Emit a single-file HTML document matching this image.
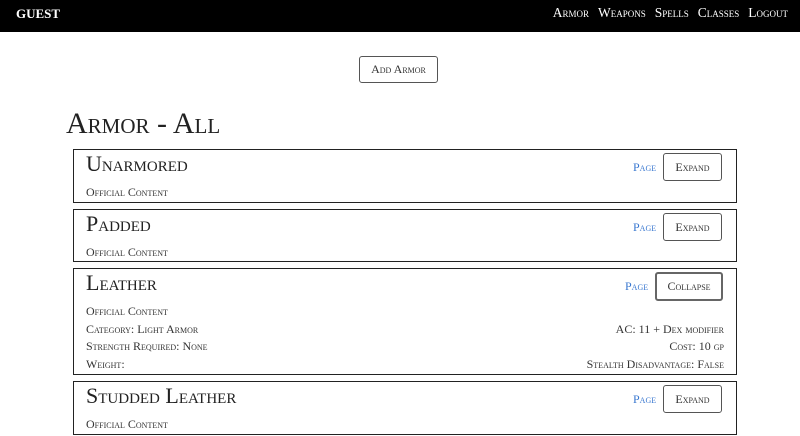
<!DOCTYPE html>
<html><head><style>
*{margin:0;padding:0;box-sizing:border-box}
body{width:800px;height:436px;overflow:hidden;background:#fff;font-family:"Liberation Serif",serif;font-variant:small-caps;color:#222;position:relative}
.nav{position:absolute;left:0;top:0;width:800px;height:32px;background:#000;color:#fff}
.nav .b{position:absolute;left:16px;top:6px;font-size:13px;font-weight:bold;font-variant:normal}
.nav .l{position:absolute;right:12px;top:5px;font-size:13.5px}
.nav .l span{margin-left:9px}
.add{position:absolute;left:359px;top:56px;width:79px;height:27px;border:1px solid #555;border-radius:3px;font-size:12px;text-align:center;line-height:25px;color:#333}
h1{position:absolute;left:66px;top:107px;font-size:30px;font-weight:normal;color:#222}
.card{position:absolute;left:73px;width:664px;border:1px solid #222}
.card h2{position:absolute;left:12px;top:1px;font-size:22px;font-weight:normal;color:#222}
.oc{position:absolute;left:12px;font-size:12px;color:#333}
.r{position:absolute;right:12px;font-size:12px;color:#333}
.pg{position:absolute;font-size:12px;color:#3a78d0}
.btn{position:absolute;border:1px solid #555;border-radius:3px;font-size:12px;text-align:center;color:#333}
</style></head><body>
<div class="nav"><div class="b">GUEST</div><div class="l"><span>Armor</span><span>Weapons</span><span>Spells</span><span>Classes</span><span>Logout</span></div></div>
<div class="add">Add Armor</div>
<h1>Armor - All</h1>

<div class="card" style="top:149px;height:54px"><h2>Unarmored</h2><div class="pg" style="left:559px;top:10px">Page</div><div class="btn" style="left:589px;top:3px;width:59px;height:28px;line-height:26px">Expand</div><div class="oc" style="top:35px">Official Content</div></div>

<div class="card" style="top:209px;height:53px"><h2>Padded</h2><div class="pg" style="left:559px;top:10px">Page</div><div class="btn" style="left:589px;top:3px;width:59px;height:28px;line-height:26px">Expand</div><div class="oc" style="top:35px">Official Content</div></div>

<div class="card" style="top:268px;height:107px"><h2>Leather</h2><div class="pg" style="left:551px;top:10px">Page</div><div class="btn" style="left:581px;top:3px;width:68px;height:29px;line-height:25px;border:2px solid #666">Collapse</div>
<div class="oc" style="top:35px">Official Content</div>
<div class="oc" style="top:53px">Category: Light Armor</div><div class="r" style="top:53px">AC: 11 + Dex modifier</div>
<div class="oc" style="top:70px">Strength Required: None</div><div class="r" style="top:70px">Cost: 10 gp</div>
<div class="oc" style="top:88px">Weight:</div><div class="r" style="top:88px">Stealth Disadvantage: False</div></div>

<div class="card" style="top:381px;height:54px"><h2>Studded Leather</h2><div class="pg" style="left:559px;top:10px">Page</div><div class="btn" style="left:589px;top:3px;width:59px;height:28px;line-height:26px">Expand</div><div class="oc" style="top:35px">Official Content</div></div>
</body></html>
